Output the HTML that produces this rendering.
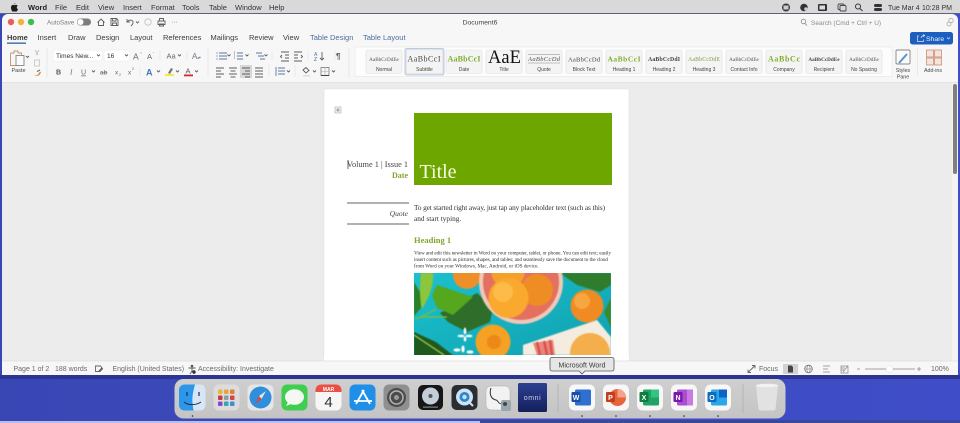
<!DOCTYPE html>
<html><head><meta charset="utf-8"><style>
html,body{margin:0;padding:0;width:960px;height:423px;overflow:hidden;background:#3f4dc6}
svg{display:block;position:absolute;left:0;top:0;filter:blur(.3px)}
text{font-family:"Liberation Sans",sans-serif;fill:#3a3a3a}
.m{font-size:7.5px;fill:#333}
.t{font-size:7.5px;fill:#3c3c3c}
.l{font-size:5px;fill:#444;text-anchor:middle}
.s{font-size:7px;fill:#6a6a6a}
.c{fill:#f4f4f4;stroke:#e2e2e2;stroke-width:.6}
.f{font-family:"Liberation Serif",serif;text-anchor:middle}
.i{fill:none;stroke:#5e5e5e;stroke-width:.9}
</style></head><body>
<svg width="960" height="423" viewBox="0 0 960 423" xmlns="http://www.w3.org/2000/svg">
<defs>
<linearGradient id="bg" x1="0" y1="0" x2="1" y2="0"><stop offset="0" stop-color="#3947b5"/><stop offset="1" stop-color="#3f4ec8"/></linearGradient>
<linearGradient id="dk" x1="0" y1="0" x2="0" y2="1"><stop offset="0" stop-color="#cfcfcf"/><stop offset="1" stop-color="#c4c4c4"/></linearGradient>
<linearGradient id="teal" x1="0" y1="0" x2="1" y2="1"><stop offset="0" stop-color="#1cc2cf"/><stop offset="1" stop-color="#0f9fae"/></linearGradient>
<linearGradient id="om" x1="0" y1="0" x2="0" y2="1"><stop offset="0" stop-color="#2c3f92"/><stop offset="1" stop-color="#141f5c"/></linearGradient>
<clipPath id="ph"><rect x="414" y="273" width="197" height="82"/></clipPath>
<clipPath id="ttl"><rect x="487" y="50" width="33" height="16"/></clipPath>
</defs>
<rect width="960" height="423" fill="url(#bg)"/>
<rect x="0" y="375" width="960" height="4" fill="#2c3590"/>
<rect x="0" y="421" width="480" height="2" fill="#b9bdea"/>
<rect x="480" y="420" width="480" height="3" fill="#39479f"/>

<!-- menu bar -->
<rect width="960" height="14" fill="#d9d9d9"/>
<rect y="13" width="960" height="1" fill="#5c6280"/>
<path d="M14 4.500c.8-.9 1.500-.9 1.600-1.500-.8.1-1.600.7-1.600 1.500zM11 7.500c0-1.800 1.200-2.600 2.200-2.600.6 0 1 .3 1.300.3.400 0 .8-.3 1.500-.3.600 0 1.300.3 1.700 1-1.400.8-1.100 2.800.3 3.300-.4 1.100-1.200 2.500-2.100 2.500-.6 0-.8-.4-1.400-.4s-.9.4-1.400.4c-1.100 0-2.100-2.400-2.100-4.200z" fill="#1c1c1c"/>
<text class="m" x="28" y="10" style="font-weight:bold;fill:#222">Word</text>
<text class="m" x="55" y="10">File</text><text class="m" x="76" y="10">Edit</text><text class="m" x="98" y="10">View</text><text class="m" x="123" y="10">Insert</text><text class="m" x="151" y="10">Format</text><text class="m" x="182" y="10">Tools</text><text class="m" x="209" y="10">Table</text><text class="m" x="235" y="10">Window</text><text class="m" x="269" y="10">Help</text>
<circle cx="786" cy="7.500" r="4" fill="#3a3a3a"/><rect x="783.500" y="5.500" width="5" height="4" fill="#ccc"/>
<circle cx="804" cy="7.500" r="3.800" fill="#333"/><circle cx="806" cy="9" r="1.800" fill="#ccc"/>
<rect x="818" y="4" width="9" height="7" rx="1" fill="#333"/><rect x="819.500" y="5.500" width="5.500" height="4" fill="#ddd"/>
<rect x="838" y="4" width="6" height="5.500" rx="1" fill="none" stroke="#444" stroke-width=".9"/><rect x="840" y="5.500" width="6" height="5.500" rx="1" fill="#d9d9d9" stroke="#444" stroke-width=".9"/>
<circle cx="858" cy="6.500" r="2.500" fill="none" stroke="#333"/><path d="M860 8.500l2.500 2.500" stroke="#333"/>
<rect x="874" y="4" width="8" height="3" rx="1.500" fill="#333"/><rect x="874" y="8" width="8" height="3" rx="1.500" fill="#333"/>
<text class="m" x="888" y="10" style="font-size:7px">Tue Mar 4</text><text class="m" x="922" y="10" style="font-size:7px">10:28 PM</text>

<!-- window -->
<rect x="2" y="14" width="956" height="361" rx="6" fill="#f7f7f7"/>
<circle cx="11" cy="22" r="3.200" fill="#ee5d54"/><circle cx="21" cy="22" r="3.200" fill="#f3b33b"/><circle cx="31" cy="22" r="3.200" fill="#3fbd4d"/>
<text x="47" y="24.500" style="font-size:6.300px;fill:#7a7a7a">AutoSave</text>
<rect x="77" y="18.500" width="14" height="7" rx="3.500" fill="#7d7d7d"/><circle cx="80.500" cy="22" r="3" fill="#fff"/>
<path class="i" d="M97.500 22.500l3.500-3.500 3.500 3.500M98.500 21.500v4h5v-4"/>
<path class="i" d="M111 18.500h5.500l1.500 1.500v5.500h-7zM112.500 18.500v2.500h3.500v-2.500M112.500 25.500v-2.500h4v2.500"/>
<path class="i" d="M127 19v3h3M127.500 21.500c2-2.500 6-1.500 5.500 1.500-.3 1.500-1 2-2 3"/>
<path class="i" d="M136 21.500l1.500 1.500 1.500-1.500"/>
<circle cx="148" cy="22" r="3.200" fill="none" stroke="#c9c9c9"/>
<path class="i" d="M158 21h7v3.500h-7zM159.500 21v-2.500h4V21M159.500 24h4v2h-4z"/>
<text x="171" y="24" style="font-size:7px;fill:#666">···</text>
<text x="480" y="24.500" text-anchor="middle" style="font-size:6.800px;fill:#444">Document6</text>
<circle cx="803.500" cy="21.500" r="2.300" fill="none" stroke="#888" stroke-width=".8"/><path d="M805 23.500l2 2" stroke="#888" stroke-width=".8"/>
<text x="811" y="25" style="font-size:6.500px;fill:#8a8a8a">Search (Cmd + Ctrl + U)</text>
<circle cx="949" cy="24" r="2" fill="none" stroke="#aaa" stroke-width=".8"/><circle cx="951" cy="20.500" r="2.200" fill="none" stroke="#aaa" stroke-width=".8"/>

<!-- tabs -->
<text class="t" x="7" y="40" style="font-weight:bold">Home</text><rect x="7" y="42.500" width="19" height="1.300" fill="#2b5f9e"/>
<text class="t" x="37.500" y="40">Insert</text><text class="t" x="68" y="40">Draw</text><text class="t" x="96" y="40">Design</text><text class="t" x="130" y="40">Layout</text><text class="t" x="163" y="40">References</text><text class="t" x="210.500" y="40">Mailings</text><text class="t" x="249" y="40">Review</text><text class="t" x="283" y="40">View</text>
<text class="t" x="310" y="40" style="fill:#4a6da0">Table Design</text><text class="t" x="363" y="40" style="fill:#4a6da0">Table Layout</text>
<rect x="910" y="32" width="43" height="12.500" rx="2.500" fill="#1d5fbf"/>
<path d="M919 36h-1.500v5.500h6v-2M921 38c.5-2 1.500-2.500 3.500-2.500M923 34.500l1.800 1-1.800 1.200" fill="none" stroke="#dbe8fa" stroke-width=".7"/>
<text x="926" y="41" style="font-size:6.800px;fill:#e6effc">Share</text><path d="M947 37.500l1.500 1.500 1.500-1.500" fill="none" stroke="#dbe8fa" stroke-width=".7"/>

<!-- ribbon -->
<path class="i" style="stroke:#c09468" d="M10.500 53h3.500v-2h4v2h3.500v4M10.500 53v12.500h6"/>
<rect x="16" y="55.500" width="8" height="10" fill="#fbfbfb" stroke="#777" stroke-width=".8"/>
<path class="i" d="M26 56l1.500 1.500 1.500-1.500"/>
<text x="18.500" y="72" text-anchor="middle" style="font-size:5.500px;fill:#444">Paste</text>
<path d="M35 50l3 5M39 50l-3 5" stroke="#bbb" fill="none" stroke-width=".8"/><rect x="34.500" y="60" width="5" height="6" fill="none" stroke="#c2c2c2" stroke-width=".8"/>
<path d="M34 76l4-1.500 2-3 1 1-2 3z" fill="#d5843c"/><path d="M37 71.500l3-1.500" stroke="#666"/>
<path d="M47 48v30" stroke="#e2e2e2" stroke-width=".7"/>
<rect x="53" y="50" width="49" height="11" rx="2" fill="#fff" stroke="#e8e8e8" stroke-width=".5"/><rect x="104" y="50" width="26" height="11" rx="2" fill="#fff" stroke="#e8e8e8" stroke-width=".5"/>
<text x="56" y="58" style="font-size:6.500px;fill:#333">Times New...</text><text x="107" y="58" style="font-size:6.500px;fill:#333">16</text>
<path class="i" d="M97 54.500l1.500 1.500 1.500-1.500M125 54.500l1.500 1.500 1.500-1.500"/>
<text x="133" y="59.500" style="font-size:8.500px;fill:#666">A</text><text x="140" y="54.500" style="font-size:4px;fill:#666">^</text><text x="147" y="59" style="font-size:7.500px;fill:#666">A</text><text x="153" y="54.500" style="font-size:4px;fill:#666">ˇ</text>
<path d="M160 51v9M187 51v9M208 48v30" stroke="#e2e2e2" stroke-width=".7"/>
<text x="166.500" y="58.500" style="font-size:7.500px;fill:#666">Aa</text><path class="i" d="M178 54.500l1.500 1.500 1.500-1.500"/>
<text x="192" y="59" style="font-size:8px;fill:#777">A</text><path d="M197 58l3-1.500 1 1-3 1.500z" fill="#b06ac0"/>
<text x="56" y="74.500" style="font-size:7px;font-weight:bold;fill:#555">B</text>
<text x="70" y="74.500" style="font-size:7px;font-style:italic;fill:#666;font-family:'Liberation Serif',serif">I</text>
<text x="81" y="74.500" style="font-size:7px;fill:#666;text-decoration:underline">U</text><path class="i" d="M92 70.500l1.500 1.500 1.500-1.500"/>
<text x="100" y="74.500" style="font-size:6.500px;fill:#666;text-decoration:line-through">ab</text>
<text x="115" y="74.500" style="font-size:6.500px;fill:#666">x</text><text x="119" y="76" style="font-size:3.500px;fill:#666">2</text>
<text x="128" y="74.500" style="font-size:6.500px;fill:#666">x</text><text x="132" y="70" style="font-size:3.500px;fill:#666">2</text>
<path d="M140 67v9" stroke="#e2e2e2" stroke-width=".7"/>
<text x="146" y="75.500" style="font-size:9px;font-weight:bold;fill:#3f78b8">A</text><path class="i" d="M157 70.500l1.500 1.500 1.500-1.500"/>
<rect x="165" y="74" width="9" height="2" fill="#f3ea3c"/><path d="M168 73l3-5 2 1-3 5z" fill="#777"/><path class="i" d="M176 70.500l1.500 1.500 1.500-1.500"/>
<rect x="184" y="74.500" width="9" height="1.800" fill="#d22a2a"/><text x="185.500" y="73.500" style="font-size:7.500px;fill:#555">A</text><path class="i" d="M195 70.500l1.500 1.500 1.500-1.500"/>
<!-- paragraph -->
<g class="i" style="stroke:#587a9d"><path d="M219 53h8M219 56h8M219 59h8"/></g><circle cx="217" cy="53" r=".6" fill="#587a9d"/><circle cx="217" cy="56" r=".6" fill="#587a9d"/><circle cx="217" cy="59" r=".6" fill="#587a9d"/>
<path class="i" d="M227.500 54.500l1.500 1.500 1.500-1.500M245.500 54.500l1.500 1.500 1.500-1.500M264.500 54.500l1.500 1.500 1.500-1.500"/>
<g class="i" style="stroke:#587a9d"><path d="M237 53h6M237 56h6M237 59h6M256 53h6M258 56h6M260 59h5"/></g><path d="M234.500 51.500v8" stroke="#888" stroke-dasharray="1 1"/>
<path d="M272 51v9M335 51v9" stroke="#e2e2e2" stroke-width=".7"/>
<path class="i" d="M281 52h8M285 55h4M285 58h4M281 61h8M282 55l-1.500 1.500 1.500 1.500M294 52h8M294 55h4M294 58h4M294 61h8M301 55l1.500 1.500-1.500 1.500"/>
<path d="M308 51v9" stroke="#e2e2e2" stroke-width=".7"/>
<text x="314" y="56" style="font-size:5px;fill:#3f78b8">A</text><text x="314" y="61" style="font-size:5px;fill:#555">Z</text><path class="i" d="M322 52v8M320 58l2 2 2-2"/>
<text x="336" y="59" style="font-size:8px;fill:#555;font-weight:bold">¶</text>
<path class="i" d="M216 68h8M216 71h5M216 74h8M216 77h5M229 68h8M230.500 71h5M229 74h8M230.500 77h5"/>
<rect x="240" y="65" width="12" height="13" fill="#d8d8d8"/>
<path class="i" d="M242 68h8M245 71h5M242 74h8M245 77h5M255 68h8M255 71h8M255 74h8M255 77h8"/>
<path d="M269 65v12M295 65v12" stroke="#e2e2e2" stroke-width=".7"/>
<path class="i" d="M278 68h7M278 71h7M278 74h7M276 67v9" style="stroke:#587a9d"/><path class="i" d="M287 70.500l1.500 1.500 1.500-1.500M313 70.500l1.500 1.500 1.500-1.500M332 70.500l1.500 1.500 1.500-1.500"/>
<path class="i" d="M303 70l3-2.500 3 3-3 2.500z"/><rect x="303" y="75" width="7" height="1.500" fill="#ddd"/>
<rect x="321" y="67.500" width="8" height="8" fill="none" stroke="#666" stroke-width=".7"/><path d="M325 67.500v8M321 71.500h8" stroke="#aaa" stroke-width=".6"/><path d="M321 75.500h8" stroke="#444"/>
<path d="M349 48v30" stroke="#e2e2e2" stroke-width=".7"/>
<!-- gallery -->
<rect x="355" y="47" width="537" height="29.500" fill="#fdfdfd" stroke="#e4e4e4" stroke-width=".6"/>
<g>
<rect class="c" x="366" y="50" width="36" height="23.500" rx="2"/>
<rect x="405" y="48.500" width="39" height="26.500" rx="2" fill="#e0e6ef" stroke="#a9bdd6" stroke-width=".8"/><rect class="c" x="406.500" y="50" width="36" height="23.500" rx="2"/>
<rect class="c" x="446" y="50" width="36" height="23.500" rx="2"/><rect class="c" x="486" y="50" width="36" height="23.500" rx="2"/><rect class="c" x="526" y="50" width="36" height="23.500" rx="2"/><rect class="c" x="566" y="50" width="36" height="23.500" rx="2"/><rect class="c" x="606" y="50" width="36" height="23.500" rx="2"/><rect class="c" x="646" y="50" width="36" height="23.500" rx="2"/><rect class="c" x="686" y="50" width="36" height="23.500" rx="2"/><rect class="c" x="726" y="50" width="36" height="23.500" rx="2"/><rect class="c" x="766" y="50" width="36" height="23.500" rx="2"/><rect class="c" x="806" y="50" width="36" height="23.500" rx="2"/><rect class="c" x="846" y="50" width="36" height="23.500" rx="2"/>
</g>
<text class="f" x="384" y="61" style="font-size:5.200px;fill:#555">AaBbCcDdEe</text>
<text class="f" x="424" y="61.500" style="font-size:8px;fill:#444" textLength="33">AaBbCcI</text>
<text class="f" x="464" y="61.500" style="font-size:8px;font-weight:bold;fill:#7fae2c" textLength="33">AaBbCcI</text>
<g clip-path="url(#ttl)"><text x="488" y="63" style="font-family:'Liberation Serif',serif;font-size:18.500px;fill:#111">AaE</text></g>
<text class="f" x="544" y="61" style="font-size:6.500px;font-style:italic;fill:#555" textLength="32">AaBbCcDd</text><path d="M528 54.500h32M528 63h32" stroke="#888" stroke-width=".6"/>
<text class="f" x="584" y="61.500" style="font-size:6.500px;fill:#444" textLength="32">AaBbCcDd</text>
<text class="f" x="624" y="61.500" style="font-size:7.500px;font-weight:bold;fill:#7fae2c" textLength="33">AaBbCcI</text>
<text class="f" x="664" y="61" style="font-size:5.800px;font-weight:bold;fill:#444" textLength="32">AaBbCcDdI</text>
<text class="f" x="704" y="61" style="font-size:5.800px;fill:#7f9e45" textLength="32">AaBbCcDdE</text>
<text class="f" x="744" y="61" style="font-size:5.200px;fill:#555">AaBbCcDdEe</text>
<text class="f" x="784" y="61.500" style="font-size:8px;font-weight:bold;fill:#7fae2c" textLength="32">AaBbCc</text>
<text class="f" x="824" y="61" style="font-size:5.200px;font-weight:bold;fill:#444">AaBbCcDdEe</text>
<text class="f" x="864" y="61" style="font-size:5.200px;fill:#555">AaBbCcDdEe</text>
<text class="l" x="384" y="71">Normal</text><text class="l" x="424.500" y="71">Subtitle</text><text class="l" x="464" y="71">Date</text><text class="l" x="504" y="71">Title</text><text class="l" x="544" y="71">Quote</text><text class="l" x="584" y="71">Block Text</text><text class="l" x="624" y="71">Heading 1</text><text class="l" x="664" y="71">Heading 2</text><text class="l" x="704" y="71">Heading 3</text><text class="l" x="744" y="71">Contact Info</text><text class="l" x="784" y="71">Company</text><text class="l" x="824" y="71">Recipient</text><text class="l" x="864" y="71">No Spacing</text>
<rect x="896" y="50" width="14" height="14" rx="1" fill="#fbfbfb" stroke="#666" stroke-width=".7"/><path d="M899 63l8-9" stroke="#5d92c6" stroke-width="2"/>
<text class="l" x="903" y="72" style="font-size:5.300px">Styles</text><text class="l" x="903" y="78.500" style="font-size:5.300px">Pane</text>
<path d="M917.500 48v28" stroke="#e2e2e2" stroke-width=".7"/>
<g fill="#f3e4dc" stroke="#c98f74" stroke-width=".8"><rect x="926.500" y="50" width="7" height="7"/><rect x="934.500" y="50" width="7" height="7"/><rect x="926.500" y="58" width="7" height="7"/><rect x="934.500" y="58" width="7" height="7"/></g>
<text class="l" x="933" y="72" style="font-size:5.300px">Add-ins</text>
<rect x="2" y="82" width="956" height="1" fill="#e3e3e3"/>

<!-- doc area -->
<rect x="2" y="83" width="956" height="278" fill="#ececec"/>
<rect x="952" y="83" width="6" height="278" fill="#f3f3f3"/>
<rect x="953" y="84" width="4" height="90" rx="2" fill="#7f7f7f"/>
<rect x="324" y="89" width="305" height="272" fill="#fff" stroke="#e0e0e0" stroke-width=".6"/>
<rect x="335" y="107" width="6" height="6" fill="#f2f2f2" stroke="#aaa" stroke-width=".6"/><path d="M338 108v4M336 110h4" stroke="#666" stroke-width=".6"/>
<rect x="414" y="113" width="198" height="72" fill="#6ea600"/>
<text x="419.500" y="178" style="font-family:'Liberation Serif',serif;font-size:20px;fill:#fbfde8">Title</text>
<path d="M348 160v9" stroke="#222" stroke-width=".7"/>
<text x="408" y="167" text-anchor="end" style="font-family:'Liberation Serif',serif;font-size:8.300px;fill:#444">Volume 1 | Issue 1</text>
<text x="408" y="178" text-anchor="end" style="font-family:'Liberation Serif',serif;font-size:8px;font-weight:bold;fill:#7ea72c">Date</text>
<path d="M347 203h62M347 224h62" stroke="#666" stroke-width=".9"/>
<text x="408" y="216" text-anchor="end" style="font-family:'Liberation Serif',serif;font-size:7.500px;font-style:italic;fill:#444">Quote</text>
<text x="414" y="210" style="font-family:'Liberation Serif',serif;font-size:7.300px;fill:#333" textLength="191">To get started right away, just tap any placeholder text (such as this)</text>
<text x="414" y="221" style="font-family:'Liberation Serif',serif;font-size:7.300px;fill:#333">and start typing.</text>
<text x="414" y="243" style="font-family:'Liberation Serif',serif;font-size:8.500px;font-weight:bold;fill:#7ea72c">Heading 1</text>
<text x="414" y="254.500" style="font-family:'Liberation Serif',serif;font-size:5.200px;fill:#333" textLength="197">View and edit this newsletter in Word on your computer, tablet, or phone. You can edit text; easily</text>
<text x="414" y="261" style="font-family:'Liberation Serif',serif;font-size:5.200px;fill:#333" textLength="194">insert content such as pictures, shapes, and tables; and seamlessly save the document to the cloud</text>
<text x="414" y="267.500" style="font-family:'Liberation Serif',serif;font-size:5.200px;fill:#333">from Word on your Windows, Mac, Android, or iOS device.</text>
<!-- photo -->
<g clip-path="url(#ph)"><g style="filter:blur(.6px)">
<rect x="410" y="270" width="205" height="90" fill="url(#teal)"/>
<path d="M414 282l6 10 1 16-7 8z" fill="#2f7f24"/>
<path d="M421 273h12c1 14-5 26-11 36-3-12-2-26-1-36z" fill="#8cc63a"/>
<path d="M414 332l22 10 18 14h-40z" fill="#1f5a1c"/><path d="M414 335l30 20" stroke="#a6d24c" stroke-width="1.200"/>
<path d="M440 313l37-20 16 15-3 14-23 10-19-10z" fill="#2e6e2a"/>
<path d="M432 295l5-10 36 12-20 18-16-7z" fill="#55a71d"/>
<path d="M415 319c7-2 14-6 21-10M420 317h27" stroke="#7fc02d" stroke-width="1.200" fill="none"/>
<circle cx="467" cy="275" r="14" fill="#ee8f2a"/>
<path d="M560 273h51v12l-11 7-23-7z" fill="#2f7d2c"/>
<path d="M611 298l-7 14 7 16z" fill="#3a8a2c"/>
<circle cx="521" cy="282" r="42" fill="#efc9b8"/><circle cx="521" cy="282" r="38" fill="#e4705f"/>
<circle cx="508" cy="271" r="17" fill="#f5a02b"/>
<circle cx="537" cy="290" r="16" fill="#ef8d25"/>
<circle cx="508.500" cy="298" r="20" fill="#f9a92e"/><circle cx="503" cy="292" r="10" fill="#fdbb48"/>
<circle cx="587" cy="306" r="16.500" fill="#ef8b22"/><circle cx="582" cy="301" r="8" fill="#f8a640"/>
<circle cx="493" cy="342" r="17.500" fill="#f5a123"/><circle cx="494" cy="342" r="7" fill="#ec8818"/>
<path d="M523 345l74-25 14 17v18h-88z" fill="#f3ecdf"/>
<path d="M533 343l20-3 2 15h-18z" fill="#e6867c"/><path d="M537 342l3 13M544 341l3 14M550 340l2 15" stroke="#dc4d44" stroke-width="2.200"/>
<circle cx="590" cy="353" r="20" fill="#f4ae4b"/>
<g fill="#fff"><ellipse cx="465" cy="331" rx="1.300" ry="3.500"/><ellipse cx="469" cy="336" rx="3.500" ry="1.300"/><ellipse cx="461" cy="336" rx="3.500" ry="1.300"/><ellipse cx="465" cy="339" rx="1.300" ry="2.500"/><ellipse cx="457" cy="350" rx="3.500" ry="1.600"/><ellipse cx="463" cy="349" rx="1.600" ry="3.500"/><ellipse cx="470" cy="352" rx="3.500" ry="1.600"/></g>
</g></g>
<rect x="324" y="355" width="305" height="6" fill="#fff"/>

<!-- status bar -->
<rect x="2" y="361" width="956" height="14" fill="#f7f7f7"/>
<path d="M2 361h956" stroke="#dedede" stroke-width=".8"/>
<text class="s" x="13.500" y="371">Page 1 of 2</text><text class="s" x="55" y="371">188 words</text>
<path class="i" d="M95.500 366h5l2 2.500v.5l-2.500 2.500h-4.500z" style="stroke:#666"/><path d="M99 371l3-3" stroke="#444"/>
<text class="s" x="112.500" y="371">English (United States)</text>
<circle cx="192" cy="366" r="1.300" fill="#555"/><path d="M188.500 368h7M192 368v3M190 374l2-3 2 3" stroke="#555" stroke-width=".9" fill="none"/><circle cx="194" cy="372" r="1.700" fill="#333"/>
<text class="s" x="198" y="371">Accessibility: Investigate</text>
<path class="i" d="M748 372.500l7-7M752 365.500h3v3M748 369.500v3h3" style="stroke:#666"/>
<text class="s" x="759" y="371">Focus</text>
<rect x="783" y="364" width="15" height="10" fill="#d2d2d2"/><path d="M788 365.500h3.500l1.500 1.500v5.500h-5z" fill="#444"/>
<circle cx="808.500" cy="369" r="3.800" fill="none" stroke="#777" stroke-width=".8"/><ellipse cx="808.500" cy="369" rx="1.600" ry="3.800" fill="none" stroke="#777" stroke-width=".6"/><path d="M804.700 369h7.600" stroke="#777" stroke-width=".6"/>
<path d="M823 366h7M823 369h5M823 372h7" stroke="#888" stroke-width=".8"/>
<path d="M841 366h7v7h-7zM843 372l5-6M841 368h4M841 370h3" stroke="#888" stroke-width=".7" fill="none"/>
<path d="M857 369h3M917 369h4M919 367v4" stroke="#888" stroke-width=".8"/>
<rect x="865" y="368.300" width="50" height="1.400" fill="#b9b9b9"/><circle cx="889.500" cy="369" r="3.300" fill="#fff" stroke="#ddd" stroke-width=".5"/>
<text class="s" x="931" y="371">100%</text>

<!-- dock -->
<rect x="174.500" y="379" width="611" height="39.500" rx="9" fill="url(#dk)"/>
<path d="M558 384v29M743 384v29" stroke="#b0b0b0" stroke-width=".8"/>
<!-- finder -->
<rect x="179.500" y="384.500" width="26" height="26" rx="5.500" fill="#d7e6f5"/><path d="M185 384.500h10c-2 7-3 13-2.500 18 .2 3 .5 5 1 8h-9a5.500 5.500 0 0 1-5.500-5.500v-15a5.500 5.500 0 0 1 5.500-5.500z" fill="#2c97ea"/>
<path d="M187 392v4M199 392v4" stroke="#1c2d50" stroke-width="1.200"/><path d="M184 402c4 3.500 12 3.500 17 0" stroke="#1c2d50" fill="none" stroke-width="1"/>
<!-- launchpad -->
<rect x="213.500" y="384.500" width="26" height="26" rx="5.500" fill="#dcdcdc"/>
<g><rect x="218" y="389.500" width="4.500" height="4.500" rx="1" fill="#e8b63a"/><rect x="224" y="389.500" width="4.500" height="4.500" rx="1" fill="#e8a33a"/><rect x="230" y="389.500" width="4.500" height="4.500" rx="1" fill="#e67b33"/><rect x="218" y="395.500" width="4.500" height="4.500" rx="1" fill="#c93a3a"/><rect x="224" y="395.500" width="4.500" height="4.500" rx="1" fill="#8aa0a8"/><rect x="230" y="395.500" width="4.500" height="4.500" rx="1" fill="#d04545"/><rect x="218" y="401.500" width="4.500" height="4.500" rx="1" fill="#8f45c2"/><rect x="224" y="401.500" width="4.500" height="4.500" rx="1" fill="#3ca0b8"/><rect x="230" y="401.500" width="4.500" height="4.500" rx="1" fill="#3c8fd4"/></g>
<!-- safari -->
<rect x="247.500" y="384.500" width="26" height="26" rx="5.500" fill="#e6e6e6"/><circle cx="260.500" cy="397.500" r="11" fill="#2f8fdc"/><path d="M266 391l-7 5 2.500 3z" fill="#e6e6e6"/><path d="M255 404l6.500-5-2.500-3z" fill="#d94a3a"/>
<!-- messages -->
<rect x="281.500" y="384.500" width="26" height="26" rx="5.500" fill="#3ecf4e"/><ellipse cx="294.500" cy="397" rx="9.500" ry="7.800" fill="#f5f7f2"/><path d="M288 402l-2 4 5-2z" fill="#f5f7f2"/>
<!-- calendar -->
<rect x="315.500" y="384.500" width="26" height="26" rx="5.500" fill="#f6f6f6"/><path d="M315.500 392v-2a5.500 5.500 0 0 1 5.500-5.500h15a5.500 5.500 0 0 1 5.500 5.500v2z" fill="#ea4f42"/>
<text x="328.500" y="391" text-anchor="middle" style="font-size:5px;font-weight:bold;fill:#fff">MAR</text>
<text x="328.500" y="407" text-anchor="middle" style="font-size:15px;fill:#333">4</text>
<!-- app store -->
<rect x="349.500" y="384.500" width="26" height="26" rx="5.500" fill="#1f8fe8"/><path d="M356 404l8-14M370 404l-8-14M354 401h18" stroke="#fff" stroke-width="1.800" fill="none"/>
<!-- settings -->
<rect x="383.500" y="384.500" width="26" height="26" rx="5.500" fill="#8f8f8f"/><circle cx="396.500" cy="397.500" r="9.500" fill="#4b4b4b"/><circle cx="396.500" cy="397.500" r="6.500" fill="none" stroke="#b5b5b5" stroke-width="1.500"/><circle cx="396.500" cy="397.500" r="2.500" fill="#9a9a9a"/>
<!-- dvd -->
<rect x="418" y="385" width="25" height="25" rx="5" fill="#161616"/><circle cx="430.500" cy="396" r="8.500" fill="#c4ced9"/><circle cx="430.500" cy="396" r="2" fill="#555"/><rect x="423" y="406.500" width="15" height="1.300" fill="#777"/>
<!-- quicktime -->
<rect x="451.500" y="385" width="26" height="25" rx="5" fill="#2a2e33"/><circle cx="464.500" cy="397" r="8.500" fill="#cfe2ef"/><circle cx="464.500" cy="397" r="5" fill="#2b87d4"/><circle cx="464.500" cy="397" r="2.200" fill="#cfe2ef"/><path d="M469 402l4 4" stroke="#cfe2ef" stroke-width="2"/>
<!-- stethoscope -->
<rect x="486" y="386" width="24" height="24" rx="5" fill="#f2f2f2" stroke="#aaa" stroke-width=".5"/><path d="M491 388c-2 6 0 11 5 12 2 0 2 4 6 4" fill="none" stroke="#333" stroke-width="1"/>
<rect x="501" y="400" width="10" height="11" rx="2" fill="#9aa7ae"/><circle cx="505" cy="404" r="2" fill="#444"/>
<!-- omni -->
<rect x="518" y="383" width="29" height="29" rx="1.500" fill="url(#om)"/>
<text x="532.500" y="400" text-anchor="middle" style="font-size:7px;fill:#c9d3ea;letter-spacing:.6px">omni</text>
<!-- office -->
<g fill="#f7f7f7"><rect x="569" y="384.500" width="26" height="26" rx="5.500"/><rect x="603" y="384.500" width="26" height="26" rx="5.500"/><rect x="637" y="384.500" width="26" height="26" rx="5.500"/><rect x="671" y="384.500" width="26" height="26" rx="5.500"/><rect x="705" y="384.500" width="26" height="26" rx="5.500"/></g>
<rect x="575" y="389.500" width="16" height="16" rx="1.500" fill="#2f6fd0"/><rect x="571.500" y="392" width="9" height="10" rx="1" fill="#1a4fa8"/><text x="576" y="400" text-anchor="middle" style="font-size:7px;font-weight:bold;fill:#fff">W</text>
<circle cx="617.500" cy="397.500" r="8.500" fill="#e8623a"/><path d="M617.500 397.500v-8.500a8.500 8.500 0 0 1 8.500 8.500z" fill="#f4a38a"/><rect x="606" y="392" width="9" height="10" rx="1" fill="#c43e1c"/><text x="610.500" y="400" text-anchor="middle" style="font-size:7px;font-weight:bold;fill:#fff">P</text>
<rect x="643" y="389.500" width="16" height="16" rx="1.500" fill="#21a366"/><rect x="651" y="389.500" width="8" height="8" fill="#33c481"/><rect x="639.500" y="392" width="9" height="10" rx="1" fill="#107c41"/><text x="644" y="400" text-anchor="middle" style="font-size:7px;font-weight:bold;fill:#fff">X</text>
<rect x="677" y="389.500" width="16" height="16" rx="1.500" fill="#a94fd0"/><rect x="687" y="389.500" width="6" height="16" fill="#c77be0"/><rect x="673.500" y="392" width="9" height="10" rx="1" fill="#7719aa"/><text x="678" y="400" text-anchor="middle" style="font-size:7px;font-weight:bold;fill:#fff">N</text>
<rect x="711" y="389.500" width="16" height="16" rx="1.500" fill="#28a8ea"/><rect x="719" y="389.500" width="8" height="8" fill="#0a64c4"/><rect x="707.500" y="392" width="9" height="10" rx="1" fill="#0f6cbd"/><text x="712" y="400" text-anchor="middle" style="font-size:7px;font-weight:bold;fill:#fff">O</text>
<!-- trash -->
<path d="M756 385h22l-2.500 24c-.2 1-1 1.500-2 1.500h-13c-1 0-1.800-.5-2-1.500z" fill="#e2e2e2"/><ellipse cx="767" cy="385.500" rx="11" ry="1.800" fill="#f2f2f2"/>
<!-- dots -->
<g fill="#2a2a2a"><circle cx="192.500" cy="416" r=".8"/><circle cx="582" cy="416" r=".8"/><circle cx="616" cy="416" r=".8"/><circle cx="650" cy="416" r=".8"/><circle cx="684" cy="416" r=".8"/><circle cx="718" cy="416" r=".8"/></g>
<!-- tooltip -->
<path d="M552 357.500h60a2 2 0 0 1 2 2v9.500a2 2 0 0 1-2 2h-27l-3 3-3-3h-27a2 2 0 0 1-2-2v-9.500a2 2 0 0 1 2-2z" fill="#e6e6e6" stroke="#555" stroke-width=".8"/>
<text x="582" y="367.500" text-anchor="middle" style="font-size:7px;fill:#3a3a3a">Microsoft Word</text>
</svg>
</body></html>
